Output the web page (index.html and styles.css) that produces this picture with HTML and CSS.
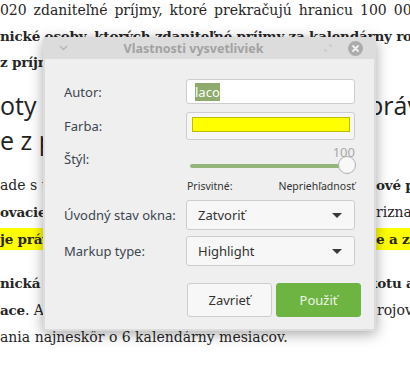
FILE: index.html
```html
<!DOCTYPE html>
<html lang="sk">
<head>
    <meta charset="UTF-8">
    <title>Vlastnosti vysvetliviek</title>
    <link rel="stylesheet" href="styles.css">
</head>
<body>
<div class="doc">
    <div class="para first">
        <div class="line shift">2020 zdaniteľné príjmy, ktoré prekračujú hranicu 100 000</div>
        <div class="line"><b>nické osoby, ktorých zdaniteľné príjmy za kalendárny rok</b></div>
        <div class="line"><b>z príjmov</b></div>
    </div>

    <div class="heading">
        <div class="split"><span class="left">oty nad hranicou</span><span class="right">právn</span></div>
        <div class="split"><span class="left">e z príjmov</span><span class="right"></span></div>
    </div>

    <div class="para mid">
        <div class="split"><span class="left">ade s tým</span><span class="right"><b>ové p</b></span></div>
        <div class="split"><span class="left"><b>ovacie obdobie</b></span><span class="right">rizna</span></div>
        <div class="split"><span class="left"><b class="mark">je právo</b></span><span class="right"><b class="mark">e a za</b></span></div>
    </div>

    <div class="para last">
        <div class="split"><span class="left"><b>nická osoba</b></span><span class="right r-otu"><b>kotu a</b></span></div>
        <div class="split"><span class="left"><b>ace</b>. Ale</span><span class="right r-rojov">rojov</span></div>
        <div class="line">ania najneskôr o 6 kalendárny mesiacov.</div>
    </div>
</div>

<div class="dialog">
    <div class="titlebar">
        <div class="tb-left">
            <svg width="9" height="6" viewBox="0 0 9 6"><path d="M1 1 L4.5 4.5 L8 1" fill="none" stroke="#b4b4b4" stroke-width="1.3"/></svg>
        </div>
        <div class="tb-title">Vlastnosti vysvetliviek</div>
        <div class="tb-right">
            <svg class="restore" width="8" height="8" viewBox="0 0 8 8">
                <path d="M4.5 0.5 H7.5 V3.5 Z" fill="#c4c4c4"/>
                <path d="M0.5 4.5 V7.5 H3.5 Z" fill="#c4c4c4"/>
            </svg>
            <svg class="close" width="15" height="15" viewBox="0 0 15 15">
                <circle cx="7.5" cy="7.5" r="7.5" fill="#acacac"/>
                <path d="M5 5 L10 10 M10 5 L5 10" stroke="#f2f2f2" stroke-width="1.8" stroke-linecap="round"/>
            </svg>
        </div>
    </div>

    <div class="content">
        <div class="row r-autor">
            <label>Autor:</label>
            <div class="entry"><span class="sel">laco</span></div>
        </div>

        <div class="row r-farba">
            <label>Farba:</label>
            <div class="colorbtn"><div class="swatch"></div></div>
        </div>

        <div class="row r-styl">
            <label>Štýl:</label>
            <div class="scale">
                <div class="scale-value">100</div>
                <div class="track">
                    <div class="fill"></div>
                    <div class="thumb"></div>
                </div>
                <div class="marks">
                    <span>Prisvitné:</span>
                    <span>Nepriehľadnosť</span>
                </div>
            </div>
        </div>

        <div class="row r-stav">
            <label>Úvodný stav okna:</label>
            <div class="combo"><span>Zatvoriť</span><i class="arrow"></i></div>
        </div>

        <div class="row r-markup">
            <label>Markup type:</label>
            <div class="combo"><span>Highlight</span><i class="arrow"></i></div>
        </div>

        <div class="actions">
            <button class="btn">Zavrieť</button>
            <button class="btn primary">Použiť</button>
        </div>
    </div>
</div>
</body>
</html>
```

FILE: styles.css
```css
html, body {
    margin: 0;
    padding: 0;
}

body {
    width: 410px;
    height: 373px;
    overflow: hidden;
    background: #ffffff;
    position: relative;
}

/* dokument v pozadi */
.doc {
    font-family: 'DejaVu Serif', serif;
    font-size: 14px;
    color: #262626;
    white-space: nowrap;
}

.doc b {
    font-size: 13.5px;
    letter-spacing: -0.2px;
}

.line {
    overflow: hidden;
}

.shift {
    margin-left: -9px;
    word-spacing: 2.5px;
}

.split {
    display: grid;
    grid-template-columns: 372px 1fr;
}

.split .left,
.split .right {
    overflow: hidden;
}

.para.first {
    line-height: 26px;
    margin-top: -3px;
}

.heading {
    font-family: 'Open Sans', sans-serif;
    font-size: 25px;
    line-height: 35px;
    color: #222;
    margin-top: 13px;
}

.heading .right {
    margin-left: -4px;
}

.para.mid {
    line-height: 27px;
    margin-top: 14px;
}

.para.mid .right {
    margin-left: 4px;
}

.para.last {
    line-height: 27px;
    margin-top: 17px;
}

.para.last .r-otu {
    margin-left: -4px;
}

.para.last .r-rojov {
    margin-left: 5px;
}

.mark {
    background: #ffff00;
    padding: 3px 0;
}

/* dialog */
.dialog {
    position: absolute;
    left: 43px;
    top: 37px;
    width: 333px;
    height: 294px;
    box-sizing: border-box;
    background: #dcdcdc;
    border-radius: 3px 3px 0 0;
    box-shadow: 0 3px 14px rgba(0, 0, 0, 0.35);
    display: flex;
    flex-direction: column;
    font-family: 'Noto Sans', sans-serif;
    font-size: 13px;
}

.titlebar {
    height: 22px;
    display: flex;
    align-items: center;
}

.tb-left {
    width: 32px;
    display: flex;
    justify-content: center;
    padding-left: 8px;
    box-sizing: border-box;
}

.tb-title {
    flex: 1;
    text-align: center;
    font-weight: bold;
    font-size: 12.5px;
    color: #a2a2a2;
}

.tb-right {
    width: 64px;
    display: flex;
    align-items: center;
    justify-content: flex-end;
    gap: 16px;
    padding-right: 13px;
    box-sizing: border-box;
}

.content {
    flex: 1;
    margin: 0 2px 2px;
    background: #efefef;
    padding: 20px 19px 12px 19px;
    display: flex;
    flex-direction: column;
    color: #3c4550;
}

.row {
    display: flex;
    align-items: center;
}

.row label {
    width: 122px;
    flex: none;
}

.row > div {
    flex: 1;
}

.entry {
    height: 25px;
    box-sizing: border-box;
    background: #fff;
    border: 1px solid #cdcdcd;
    border-radius: 3px;
    display: flex;
    align-items: center;
    padding-left: 8px;
}

.sel {
    background: #8eab6d;
    color: #fff;
    line-height: 18px;
}

.r-farba {
    margin-top: 8px;
}

.colorbtn {
    height: 28px;
    box-sizing: border-box;
    background: #f6f6f6;
    border: 1px solid #cdcdcd;
    border-radius: 3px;
    padding: 4px 4px 0 5px;
}

.swatch {
    height: 15px;
    box-sizing: border-box;
    background: #ffff00;
    border: 1px solid #bdbd00;
}

.r-styl {
    align-items: flex-start;
    margin-top: 5px;
}

.r-styl label {
    margin-top: 5px;
}

.scale-value {
    text-align: right;
    color: #a8a8a8;
    height: 14px;
    line-height: 14px;
}

.track {
    position: relative;
    height: 14px;
    margin: 0 8px 0 4px;
}

.fill {
    position: absolute;
    left: 0;
    right: 0;
    top: 5px;
    height: 4px;
    border-radius: 2px;
    background: #95b47a;
}

.thumb {
    position: absolute;
    right: -9px;
    top: -3px;
    width: 18px;
    height: 18px;
    box-sizing: border-box;
    border-radius: 50%;
    background: #f8f8f8;
    border: 1px solid #b0b0b0;
}

.marks {
    display: flex;
    justify-content: space-between;
    font-size: 10.5px;
    color: #333;
    margin-top: 6px;
    padding-left: 1px;
}

.r-stav {
    margin-top: 7px;
}

.combo {
    height: 30px;
    box-sizing: border-box;
    background: #f7f7f7;
    border: 1px solid #cdcdcd;
    border-radius: 3px;
    display: flex;
    align-items: center;
    justify-content: space-between;
    padding: 0 12px 0 11px;
    color: #333;
}

.arrow {
    width: 0;
    height: 0;
    border-left: 5px solid transparent;
    border-right: 5px solid transparent;
    border-top: 5px solid #3a3a3a;
}

.r-markup {
    margin-top: 6px;
}

.actions {
    margin-top: auto;
    margin-right: -6px;
    display: flex;
    justify-content: flex-end;
    gap: 4px;
}

.btn {
    width: 85px;
    height: 34px;
    border-radius: 3px;
    font-family: 'Noto Sans', sans-serif;
    font-size: 13px;
    border: 1px solid #cdcdcd;
    background: #f7f7f7;
    color: #333;
}

.btn.primary {
    background: #6db442;
    border-color: #6db442;
    color: #eef6e8;
}
```
